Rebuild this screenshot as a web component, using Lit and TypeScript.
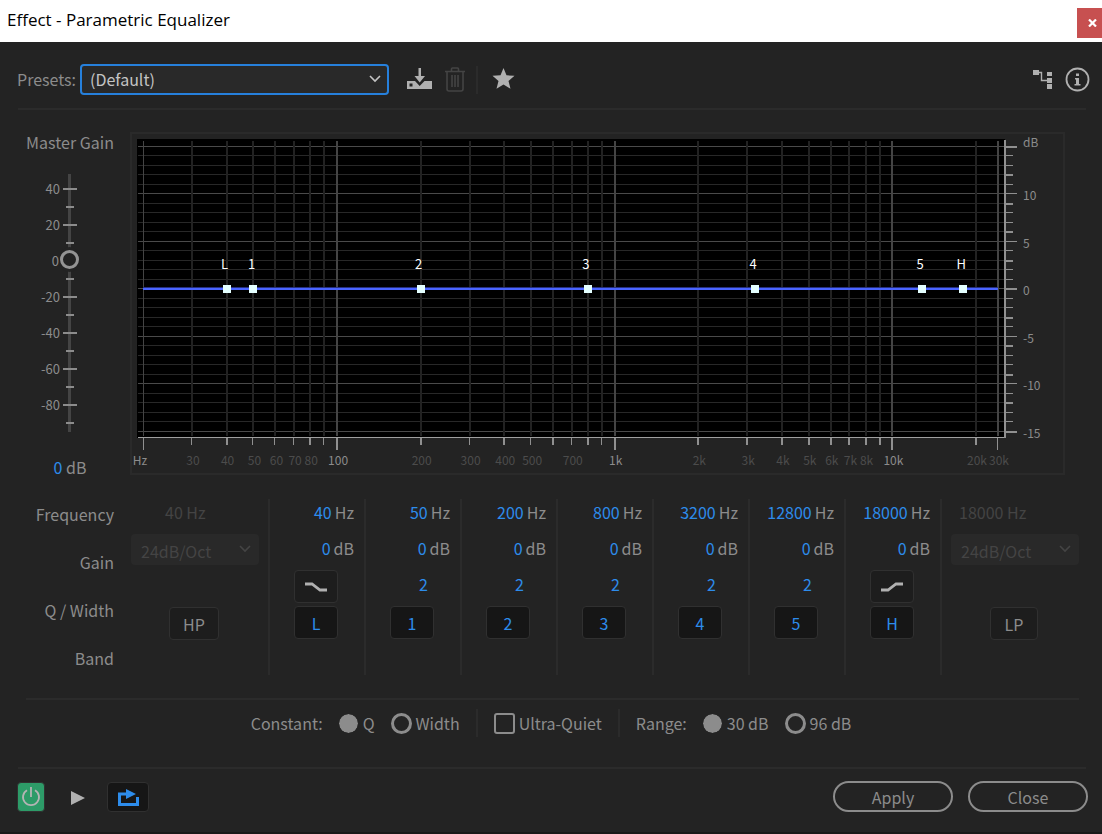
import { LitElement, html, svg, css, nothing } from "lit";
import { customElement } from "lit/decorators.js";

const F_MIN = 20;
const F_MAX = 24000;
const pct = (f: number) =>
  `${(Math.log(f / F_MIN) / Math.log(F_MAX / F_MIN)) * 100}%`;

/* distance from the top edge of the black area to a gain line */
const dbY = (db: number) => Math.round(149 - db * 9.5);

const decades = [100, 1000, 10000];
const minors: number[] = [];
for (const base of [10, 100, 1000, 10000]) {
  for (let n = 2; n < 10; n++) {
    const f = n * base;
    if (f > F_MIN && f < F_MAX) minors.push(f);
  }
}
const labelFreqs: Array<[number, string]> = [
  [30, "30"], [40, "40"], [50, "50"], [60, "60"], [70, "70"], [80, "80"],
  [100, "100"], [200, "200"], [300, "300"], [400, "400"], [500, "500"],
  [700, "700"], [1000, "1k"], [2000, "2k"], [3000, "3k"], [4000, "4k"],
  [5000, "5k"], [6000, "6k"], [7000, "7k"], [8000, "8k"], [10000, "10k"],
  [20000, "20k"], [24000, "30k"],
];
const dbs = Array.from({ length: 31 }, (_, i) => 15 - i);

interface Band {
  id: string;
  freq: number;
  shelf?: "low" | "high";
}
const bands: Band[] = [
  { id: "L", freq: 40, shelf: "low" },
  { id: "1", freq: 50 },
  { id: "2", freq: 200 },
  { id: "3", freq: 800 },
  { id: "4", freq: 3200 },
  { id: "5", freq: 12800 },
  { id: "H", freq: 18000, shelf: "high" },
];

const base = css`
  * {
    box-sizing: border-box;
  }
  button,
  select,
  input {
    font: inherit;
    color: inherit;
    margin: 0;
  }
  button {
    padding: 0;
    border: 0;
    background: none;
    cursor: pointer;
  }
  svg {
    display: block;
  }
`;

@customElement("eq-plot")
export class EqPlot extends LitElement {
  static styles = [
    base,
    css`
      :host {
        display: block;
        border: 2px solid #2a2a2a;
        padding: 5px 58px 35px 5px;
      }
      .area {
        background: #000;
        padding: 0 7px 0 6px;
      }
      .plot {
        width: 100%;
        height: 299px;
        overflow: visible;
        shape-rendering: crispEdges;
      }
      .h {
        x: -5px;
        width: calc(100% + 11px);
        height: 1px;
        fill: #282828;
      }
      .h.major {
        fill: #4a4a4a;
      }
      .v {
        fill: #222;
      }
      .v.major {
        fill: #444;
      }
      .tick {
        fill: #909090;
      }
      .base {
        x: -5px;
        width: calc(100% + 12px);
        fill: #a0a0a0;
      }
      .curve {
        fill: #4a64ff;
      }
      .curve.edge {
        fill: #26307c;
      }
      .node {
        fill: #e4ffff;
      }
      text {
        font-size: 12px;
        fill: #8c8c8c;
      }
      .dim {
        fill: #4c4c4c;
      }
      .name {
        font-size: 13px;
        fill: #fff;
      }
      .mid {
        text-anchor: middle;
      }
    `,
  ];

  render() {
    return html`<div class="area">
      <svg class="plot" role="img" aria-label="Equalizer curve">
        ${dbs.map(
          (d) => svg`<rect class="h ${d % 5 ? "" : "major"}" y=${dbY(d)} height="1"/>`
        )}
        ${minors.map(
          (f) => svg`<svg x=${pct(f)} overflow="visible">
            <rect class="v" x="-1" y="2" width="2" height="295"/>
            <rect class="tick" x="-1" y="298" width=${f === 20000 || f % 40 === 0 ? 2 : 1} height="8"/>
          </svg>`
        )}
        ${[F_MIN, ...decades, F_MAX].map(
          (f) => svg`<svg x=${pct(f)} overflow="visible">
            <rect class="v major" x=${f === F_MIN ? 0 : -1} y="2" width=${f === F_MIN ? 1 : 2} height="295"/>
            <rect class="tick" x=${f === F_MIN ? 0 : -1} y="298" width=${decades.includes(f) ? 2 : 1} height="13"/>
          </svg>`
        )}
        <rect class="base" y="298" height="1" />
        <text class="mid" x="-3" y="326">Hz</text>
        ${labelFreqs.map(
          ([f, t]) => svg`<svg x=${pct(f)} overflow="visible">
            <text class="mid ${decades.includes(f) ? "" : "dim"}" x="1" y="326">${t}</text>
          </svg>`
        )}
        <svg x="100%" overflow="visible">
          <rect class="tick" x="6" y="1" width="2" height="298" />
          ${dbs.map(
            (d) => svg`<rect class="tick" x="8" y=${dbY(d)} width=${d % 5 ? 7 : 11} height=${d % 3 ? 1 : 2}/>`
          )}
          <text x="25" y="8">dB</text>
          ${[10, 5, 0, -5, -10, -15].map(
            (d) => svg`<text x="25" y=${dbY(d) + 7}>${d}</text>`
          )}
        </svg>
        <rect class="curve edge" x="0" y="148" width="100%" height="1" />
        <rect class="curve" x="0" y="149" width="100%" height="2" />
        ${bands.map(
          (b) => svg`<svg x=${pct(b.freq)} overflow="visible">
            <rect class="node" x="-4" y="146" width="8" height="8"/>
            <text class="mid name" x="-2" y="130">${b.id}</text>
          </svg>`
        )}
      </svg>
    </div>`;
  }
}

@customElement("master-gain")
export class MasterGain extends LitElement {
  static styles = [
    base,
    css`
      :host {
        display: flex;
        flex-direction: column;
        align-items: center;
      }
      label {
        line-height: 24px;
      }
      .fader {
        position: relative;
        width: 88px;
        height: 258px;
        margin: 20px 0 23px;
      }
      .scale {
        width: 100%;
        height: 100%;
        shape-rendering: crispEdges;
        fill: #8c8c8c;
        font-size: 13px;
      }
      .track {
        fill: #444;
      }
      input {
        position: absolute;
        left: 34px;
        top: 0;
        width: 19px;
        height: 100%;
        appearance: none;
        background: none;
        writing-mode: vertical-lr;
        direction: rtl;
      }
      input::-webkit-slider-thumb {
        appearance: none;
        width: 19px;
        height: 19px;
        border: 3px solid #949494;
        border-radius: 50%;
        background: #232323;
        box-shadow: 0 3px #232323, 0 -3px #232323;
      }
      .value {
        line-height: 24px;
      }
      .hot {
        color: #2d8ceb;
      }
    `,
  ];

  render() {
    const ticks = Array.from({ length: 14 }, (_, i) => 40 - i * 10);
    const y = (d: number) => Math.round(86 - d * 1.8);
    return html`
      <label for="gain">Master Gain</label>
      <div class="fader">
        <svg class="scale" aria-hidden="true">
          <rect class="track" x="42" width="3" height="258" />
          ${ticks.map((d) =>
            d === 0
              ? nothing
              : d % 20
                ? svg`<rect x="40" y=${y(d)} width="8" height="2"/>`
                : svg`<rect x="37" y=${y(d)} width="14" height="2"/>`
          )}
          ${ticks
            .filter((d) => d % 20 === 0)
            .map((d) => svg`<text x=${d === 0 ? 33 : 34} y=${y(d) + 6} text-anchor="end">${d}</text>`)}
        </svg>
        <input id="gain" type="range" min="-90" max="42" value="0" />
      </div>
      <div class="value"><button class="hot">0</button> dB</div>
    `;
  }
}

@customElement("app-root")
export class AppRoot extends LitElement {
  static styles = [
    base,
    css`
      :host {
        display: flex;
        flex-direction: column;
        min-height: 100vh;
        background: #232323;
        color: #8c8c8c;
        border-bottom: 2px solid #191919;
        box-sizing: border-box;
        font: 16px/24px "Noto Sans CJK JP", "Noto Sans", sans-serif;
      }
      .title {
        display: flex;
        align-items: center;
        justify-content: space-between;
        height: 42px;
        padding-left: 7px;
        background: #fff;
        color: #000;
      }
      h1 {
        margin: 0;
        padding-bottom: 2px;
        font: 17px/24px "Open Sans", "Noto Sans", sans-serif;
      }
      .x {
        display: grid;
        place-items: center;
        width: 25px;
        height: 30px;
        margin-top: 4px;
        padding-left: 5px;
        background: #c75050;
      }
      .tools {
        display: flex;
        align-items: center;
        height: 66px;
        margin: 0 16px 0 17px;
        padding-top: 9px;
      }
      .tools label {
        padding-bottom: 2px;
      }
      .rule {
        height: 2px;
        margin: 0 16px 0 18px;
        background: #2b2b2b;
      }
      .rule.inset {
        margin: 0 23px 0 26px;
      }
      .pick {
        position: relative;
        display: flex;
        color: #c4c4c4;
      }
      .pick select {
        width: 309px;
        height: 31px;
        padding: 0 8px 2px;
        appearance: none;
        border: 2px solid #2680dc;
        border-radius: 4px;
        background: #292929;
        outline: none;
      }
      .pick svg {
        position: absolute;
        right: 7px;
        top: 10px;
        pointer-events: none;
      }
      .presets {
        margin: 0 18px 0 4px;
      }
      .pick.slope select {
        width: 128px;
        padding: 3px 10px 0;
        border: 0;
        opacity: 1;
      }
      .slope {
        color: #444;
      }
      .icon {
        color: #b0b0b0;
      }
      .icon:disabled {
        color: #444;
      }
      .save {
        margin-right: 13px;
      }
      .bar {
        width: 2px;
        height: 28px;
        background: #2b2b2b;
      }
      .tools .bar {
        margin: 0 14px 0 11px;
      }
      .route {
        margin-left: auto;
        margin-right: 13px;
      }
      .info {
        margin-right: -4px;
      }
      .main {
        display: grid;
        grid-template-columns: 88px 1fr;
        column-gap: 16px;
        align-items: start;
        margin: 22px 37px 0 26px;
      }
      .gain {
        margin-top: -2px;
      }
      .bands {
        display: grid;
        grid-template-columns: 116px 152px repeat(7, minmax(96px, 1fr)) 162px;
        margin: 20px 0 23px;
      }
      .names {
        display: flex;
        flex-direction: column;
        gap: 24px;
        padding: 3px 2px 0 0;
        text-align: right;
      }
      .band {
        display: grid;
        grid-template-rows: repeat(4, 24px);
        row-gap: 12px;
        height: 176px;
        padding: 1px 10px 0 0;
        border-left: 2px solid #2b2b2b;
        text-align: right;
      }
      .band .q {
        padding-right: 22px;
      }
      .unit {
        margin-left: 3px;
      }
      .hot {
        color: #2d8ceb;
      }
      .key {
        display: grid;
        place-items: center;
        width: 44px;
        height: 33px;
        border: 1px solid #303030;
        border-radius: 4px;
        background: #1d1d1d;
      }
      .band .key {
        margin: -2px 0 0 24px;
      }
      .band .key.on,
      .loop.key {
        background: #161616;
      }
      .cell {
        display: flex;
        flex-direction: column;
        align-items: flex-start;
        gap: 42px;
      }
      .cell .off {
        height: 24px;
        margin: 1px 0 -32px;
        color: #444;
      }
      .hp {
        padding-left: 15px;
      }
      .hp .off {
        padding-left: 34px;
      }
      .hp .key {
        width: 50px;
        margin-left: 38px;
      }
      .lp {
        padding-left: 9px;
        border-left: 2px solid #2b2b2b;
      }
      .lp .off {
        padding-left: 8px;
      }
      .lp .key {
        width: 48px;
        margin-left: 39px;
      }
      .options {
        display: flex;
        justify-content: center;
        align-items: center;
        height: 46px;
        margin-bottom: 21px;
      }
      .options fieldset {
        display: flex;
        align-items: center;
        border: 0;
        margin: 0;
        padding: 0;
      }
      .options legend {
        float: left;
        padding: 0;
      }
      .options label {
        display: flex;
        align-items: center;
        gap: 4px;
      }
      input[type="radio"],
      input[type="checkbox"] {
        appearance: none;
        width: 21px;
        height: 21px;
        border: 3px solid #8c8c8c;
        border-radius: 50%;
      }
      input[type="radio"]:checked {
        background: #8c8c8c;
        border-color: #232323;
        border-width: 1px;
        background-clip: padding-box;
      }
      input[type="checkbox"] {
        border-width: 2px;
        border-radius: 3px;
      }
      .options label.one {
        margin: 0 16px 0 15px;
      }
      .options .bar {
        margin: 0 16px;
      }
      .foot {
        display: flex;
        align-items: flex-end;
        margin: 12px 14px 20px 17px;
      }
      .power {
        display: grid;
        place-items: center;
        width: 28px;
        height: 30px;
        border: 1px solid #303030;
        border-radius: 4px;
        background: #2d9b68;
        color: #b4b4b4;
      }
      .play {
        margin: 0 22px 0 26px;
        padding-bottom: 7px;
      }
      .loop.key {
        width: 42px;
        height: 30px;
      }
      .pill {
        width: 120px;
        height: 31px;
        border: 2px solid #8c8c8c;
        border-radius: 16px;
        line-height: 26px;
      }
      .apply {
        margin: 0 15px 0 auto;
      }
    `,
  ];

  private chevron() {
    return html`<svg width="14" height="10" viewBox="0 0 14 10" aria-hidden="true">
      <path d="M2 2l5 5 5-5" fill="none" stroke="currentColor" stroke-width="1.6" />
    </svg>`;
  }

  private slope(side: string, freq: number, key: string) {
    return html`<div class="cell ${side}">
      <div class="off">${freq} Hz</div>
      <div class="pick slope">
        <select disabled aria-label="${key} slope"><option>24dB/Oct</option></select>
        ${this.chevron()}
      </div>
      <button class="key">${key}</button>
    </div>`;
  }

  private band(b: Band) {
    return html`<div class="band">
      <div><button class="hot">${b.freq}</button><span class="unit">Hz</span></div>
      <div><button class="hot">0</button><span class="unit">dB</span></div>
      ${b.shelf
        ? html`<button class="key shape" aria-label="${b.shelf} shelf slope">
            <svg width="22" height="12" viewBox="0 0 22 12" aria-hidden="true">
              <path
                d=${b.shelf === "low" ? "M0 3h7l8 6h7" : "M0 9h7l8-6h7"}
                fill="none" stroke="#b0b0b0" stroke-width="2.8" />
            </svg>
          </button>`
        : html`<div class="q"><button class="hot">2</button></div>`}
      <button class="key on hot" aria-label="Band ${b.id}">${b.id}</button>
    </div>`;
  }

  render() {
    return html`
      <header class="title">
        <h1>Effect - Parametric Equalizer</h1>
        <button class="x" aria-label="Close window">
          <svg width="9" height="8" viewBox="0 0 9 8">
            <path d="M1 .5l7 7M8 .5l-7 7" stroke="#fff" stroke-width="2.2" />
          </svg>
        </button>
      </header>
      <div class="tools">
        <label for="preset">Presets:</label>
        <div class="pick presets">
          <select id="preset"><option>(Default)</option></select>
          ${this.chevron()}
        </div>
        <button class="icon save" aria-label="Save preset">
          <svg width="25" height="23" viewBox="0 0 25 23" fill="currentColor">
            <path d="M11.500 0h2.500v8h4l-5.300 6.500L7.500 8h4z" />
            <path fill-rule="evenodd" d="M0 13h8l4.700 5 4.800-5H25v8H0zM2.500 15.500v3h3v-3z" />
          </svg>
        </button>
        <button class="icon" disabled aria-label="Delete preset">
          <svg width="20" height="25" viewBox="0 0 20 25" fill="none" stroke="currentColor" stroke-width="1.6">
            <path d="M0 4.500h20M6.500 4V2q0-1 1-1h5q1 0 1 1v2M2 5v17q0 2 2 2h12q2 0 2-2V5" />
            <path d="M7 8v12M10 8v12M13 8v12" />
          </svg>
        </button>
        <div class="bar"></div>
        <button class="icon" aria-label="Favorite">
          <svg width="23" height="23" viewBox="0 0 23 23" fill="currentColor">
            <path d="M11.500 0l3 7.300 8 .4-6 5.200 2 7.900-7-4.300-7 4.300 2-7.900-6-5.200 8-.4z" />
          </svg>
        </button>
        <button class="icon route" aria-label="Channel map">
          <svg width="19" height="19" viewBox="0 0 19 19" fill="currentColor">
            <path d="M0 0h6v5H0zM14 2h5v4h-5zM14 8h5v5h-5zM14 14h5v5h-5z" />
            <path d="M6 2.500h2.500v8H14" fill="none" stroke="currentColor" stroke-width="1.400" />
          </svg>
        </button>
        <button class="icon info" aria-label="Information">
          <svg width="25" height="25" viewBox="0 0 25 25">
            <circle cx="12.500" cy="12.500" r="11" fill="none" stroke="currentColor" stroke-width="1.800" />
            <path d="M11 6.500h3v2.500h-3zM10 11h4v6h1.500v1.500h-6V17H11v-4.500h-1z" fill="currentColor" />
          </svg>
        </button>
      </div>
      <div class="rule"></div>
      <section class="main">
        <master-gain class="gain"></master-gain>
        <eq-plot></eq-plot>
      </section>
      <section class="bands">
        <div class="names">
          <div>Frequency</div>
          <div>Gain</div>
          <div>Q / Width</div>
          <div>Band</div>
        </div>
        ${this.slope("hp", 40, "HP")} ${bands.map((b) => this.band(b))}
        ${this.slope("lp", 18000, "LP")}
      </section>
      <div class="rule inset"></div>
      <section class="options">
        <fieldset>
          <legend>Constant:</legend>
          <label class="one"><input type="radio" name="constant" checked />Q</label>
          <label><input type="radio" name="constant" />Width</label>
        </fieldset>
        <div class="bar"></div>
        <label><input type="checkbox" />Ultra-Quiet</label>
        <div class="bar"></div>
        <fieldset>
          <legend>Range:</legend>
          <label class="one"><input type="radio" name="range" checked />30 dB</label>
          <label><input type="radio" name="range" />96 dB</label>
        </fieldset>
      </section>
      <div class="rule"></div>
      <footer class="foot">
        <button class="power" aria-label="Power">
          <svg width="20" height="20" viewBox="0 0 20 20" fill="none" stroke="currentColor" stroke-width="1.800">
            <path d="M10 0v10M6 3.200a8 8 0 1 0 8 0" />
          </svg>
        </button>
        <button class="icon play" aria-label="Play">
          <svg width="14" height="14" viewBox="0 0 14 14"><path d="M0 0l14 7-14 7z" fill="currentColor" /></svg>
        </button>
        <button class="key loop hot" aria-label="Loop">
          <svg width="21" height="17" viewBox="0 0 21 17">
            <path d="M8 5H1.500v10.500h18V8" fill="none" stroke="currentColor" stroke-width="3" />
            <path d="M8 0l10 5-10 5z" fill="currentColor" />
          </svg>
        </button>
        <button class="pill apply">Apply</button>
        <button class="pill">Close</button>
      </footer>
    `;
  }
}
